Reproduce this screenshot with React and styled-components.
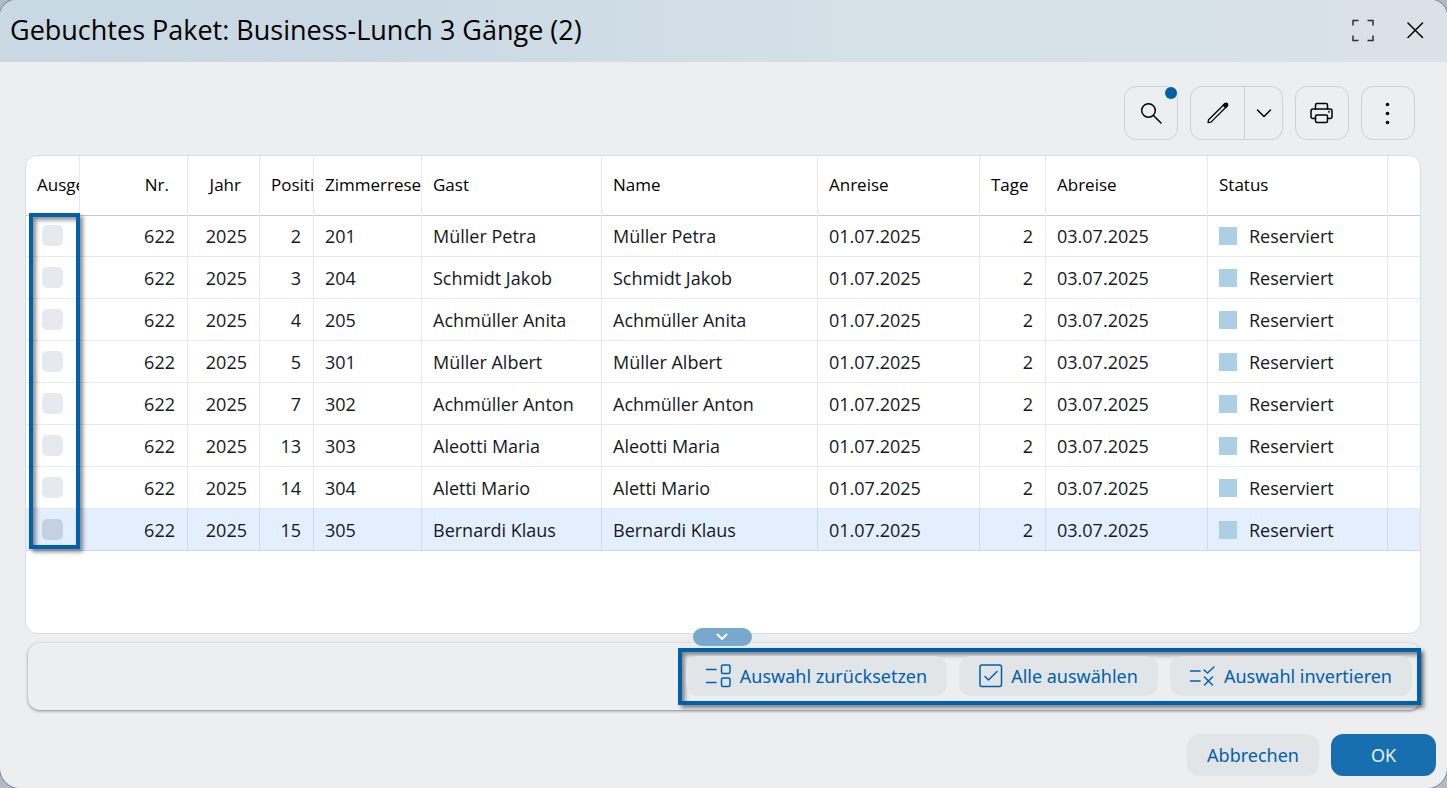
import { useState } from 'react'
import styled, { createGlobalStyle } from 'styled-components'

const GlobalStyle = createGlobalStyle`
  * {
    box-sizing: border-box;
  }

  body {
    margin: 0;
    background: #b3bac6;
    font-family: "Open Sans", "Noto Sans", sans-serif;
    font-size: 18px;
    color: #15181c;
  }

  button {
    font: inherit;
    cursor: pointer;
  }
`

const Dialog = styled.div`
  display: flex;
  flex-direction: column;
  min-height: 100vh;
  background: #edeef0;
  border-radius: 16px 16px 20px 20px;
  box-shadow: 0 0 0 1px #7c8799;
  overflow: hidden;
`

const Header = styled.header`
  display: flex;
  align-items: center;
  justify-content: space-between;
  height: 62px;
  padding: 0 16px 2px 10px;
  background: linear-gradient(90deg, #c8d9e3 0%, #cad8e4 25%, #d4e1e7 60%, #d6e2e7 80%, #dae1e9 95%);
`

const Title = styled.h1`
  margin: 0;
  color: #000;
  font-size: 27px;
  font-weight: 400;
  line-height: 36px;
`

const HeaderActions = styled.div`
  display: flex;
  gap: 20px;
`

const IconButton = styled.button`
  display: flex;
  align-items: center;
  justify-content: center;
  width: 32px;
  height: 32px;
  padding: 0;
  border: 0;
  background: none;
  color: #000;
`

const Body = styled.main`
  display: flex;
  flex: 1;
  flex-direction: column;
  padding: 24px 26px 0 25px;
`

const Toolbar = styled.div`
  display: flex;
  justify-content: flex-end;
  gap: 12px;
  padding-right: 6px;
`

const ToolButton = styled.button`
  position: relative;
  display: flex;
  align-items: center;
  justify-content: center;
  width: ${({ $narrow }) => ($narrow ? '38px' : '54px')};
  height: 54px;
  padding: 0;
  border: 1px solid #cdd1d9;
  border-radius: 12px;
  background: transparent;
  color: #000;
`

const SplitButton = styled.div`
  display: flex;

  ${ToolButton}:first-child {
    width: 55px;
    border-radius: 12px 0 0 12px;
  }

  ${ToolButton}:last-child {
    border-left: 0;
    border-radius: 0 12px 12px 0;
  }
`

const Dot = styled.span`
  position: absolute;
  top: 0;
  right: 0;
  width: 12px;
  height: 12px;
  border-radius: 50%;
  background: #0060a9;
`

const TableCard = styled.section`
  position: relative;
  flex: 1;
  margin-top: 15px;
  border: 1px solid #dadde3;
  border-radius: 12px;
  background: #fff;
`

const Table = styled.table`
  width: 100%;
  table-layout: fixed;
  border-spacing: 0;
`

const HeadCell = styled.th`
  height: 59px;
  padding: 0 0 2px 11px;
  padding-right: ${({ $right }) => ($right ? '18px' : '0')};
  border-right: 1px solid #e6e9ed;
  box-shadow: 0 1px #c5c8d0;
  overflow: hidden;
  color: #000;
  font-size: 17px;
  font-weight: 400;
  text-align: ${({ $right }) => ($right ? 'right' : 'left')};
  white-space: nowrap;

  &:first-child {
    border-top-left-radius: 12px;
  }

  &:last-child {
    border-right: 0;
  }
`

const Cell = styled.td`
  height: 42px;
  padding: 0 12px 0 11px;
  border-right: 1px solid #e6e9ed;
  border-bottom: 1px solid #e6e9ed;
  line-height: 24px;
  text-align: ${({ $right }) => ($right ? 'right' : 'left')};
  white-space: nowrap;

  &:last-child {
    border-right: 0;
  }
`

const Row = styled.tr`
  ${Cell} {
    background: ${({ $active }) => ($active ? '#e3effe' : 'transparent')};
    border-color: ${({ $active }) => ($active ? '#cddaeb' : '#e6e9ed')};
  }
`

const Checkbox = styled.input`
  display: block;
  appearance: none;
  width: 21px;
  height: 21px;
  margin: 0 0 0 5px;
  border-radius: 5px;
  background: ${({ $active }) => ($active ? '#c4d1e2' : '#e6eaef')};

  &:checked {
    background: #0060a9;
  }
`

const Status = styled.span`
  display: flex;
  align-items: center;
  gap: 12px;

  &::before {
    content: "";
    width: 18px;
    height: 18px;
    background: #abd0e6;
  }
`

const ColumnFrame = styled.div`
  position: absolute;
  top: 57px;
  left: 3px;
  width: 51px;
  height: 336px;
  border: 4px solid #0060a9;
  box-shadow: 3px 3px 4px rgba(0, 0, 0, 0.45), inset 3px 3px 4px rgba(0, 0, 0, 0.45);
  pointer-events: none;
`

const ActionPanel = styled.footer`
  position: relative;
  display: flex;
  justify-content: flex-end;
  margin: 9px 0 0 3px;
  padding: 5px 0;
  border-radius: 12px;
  box-shadow: 0 1px 3px rgba(60, 70, 90, 0.6);
`

const ActionFrame = styled.div`
  display: flex;
  gap: 12px;
  padding: 4px 5px 5px 4px;
  border: 4px solid #0060a9;
  box-shadow: 3px 3px 4px rgba(0, 0, 0, 0.45), inset 3px 3px 4px rgba(0, 0, 0, 0.45);
`

const CollapseButton = styled.button`
  position: absolute;
  top: -15px;
  left: 50%;
  display: flex;
  align-items: center;
  justify-content: center;
  width: 59px;
  height: 18px;
  margin-left: -32px;
  padding: 0;
  border: 0;
  border-radius: 9px;
  background: #79a8cd;
  color: #fff;
`

const Button = styled.button`
  display: flex;
  align-items: center;
  justify-content: center;
  gap: 8px;
  height: ${({ $large }) => ($large ? '42px' : '40px')};
  padding: 0 20px;
  border: 0;
  border-radius: 12px;
  background: ${({ $primary }) => ($primary ? '#176fb0' : '#e1e5e8')};
  color: ${({ $primary }) => ($primary ? '#e8f2fb' : '#0060a9')};
  font-family: "Noto Sans", "Open Sans", sans-serif;
  white-space: nowrap;
`

const DialogButtons = styled.div`
  display: flex;
  justify-content: flex-end;
  gap: 12px;
  padding: 24px 11px 12px;

  ${Button}:last-child {
    width: 105px;
  }
`

const columns = [
  { title: 'Ausgewählt', width: 54 },
  { title: 'Nr.', width: 108, right: true },
  { title: 'Jahr', width: 72, right: true },
  { title: 'Position', width: 54 },
  { title: 'Zimmerreservierung', width: 108 },
  { title: 'Gast', width: 180 },
  { title: 'Name', width: 216 },
  { title: 'Anreise', width: 162 },
  { title: 'Tage', width: 66, right: true },
  { title: 'Abreise', width: 162 },
  { title: 'Status', width: 180 },
  { title: '' },
]

const guests = [
  { position: 2, room: '201', name: 'Müller Petra' },
  { position: 3, room: '204', name: 'Schmidt Jakob' },
  { position: 4, room: '205', name: 'Achmüller Anita' },
  { position: 5, room: '301', name: 'Müller Albert' },
  { position: 7, room: '302', name: 'Achmüller Anton' },
  { position: 13, room: '303', name: 'Aleotti Maria' },
  { position: 14, room: '304', name: 'Aletti Mario' },
  { position: 15, room: '305', name: 'Bernardi Klaus' },
]

function Icon({ width = 24, height = 24, stroke = 1.5, children }) {
  return (
    <svg
      width={width}
      height={height}
      viewBox={`0 0 ${width} ${height}`}
      fill="none"
      stroke="currentColor"
      strokeWidth={stroke}
      strokeLinecap="round"
      strokeLinejoin="round"
      aria-hidden="true"
    >
      {children}
    </svg>
  )
}

export default function App() {
  const [selected, setSelected] = useState([])

  const toggle = (position) =>
    setSelected((old) => (old.includes(position) ? old.filter((p) => p !== position) : [...old, position]))

  return (
    <>
      <GlobalStyle />
      <Dialog role="dialog" aria-labelledby="dialog-title">
        <Header>
          <Title id="dialog-title">Gebuchtes Paket: Business-Lunch 3 Gänge (2)</Title>
          <HeaderActions>
            <IconButton aria-label="Vollbild">
              <Icon>
                <path strokeLinecap="butt" strokeLinejoin="miter" stroke="#27313a" d="M2 7.500V2.500H7.500M16.500 2.500h5.500v5M22 17.500v5H16.500M7.500 22.500H2v-5" />
              </Icon>
            </IconButton>
            <IconButton aria-label="Schließen">
              <Icon>
                <path d="M5 5l14.500 14.500M19.500 5L5 19.500" />
              </Icon>
            </IconButton>
          </HeaderActions>
        </Header>

        <Body>
          <Toolbar>
            <ToolButton aria-label="Suchen">
              <Icon>
                <circle cx="9.500" cy="9.500" r="6.800" />
                <path d="M14.500 14.500l7.500 7.500" />
              </Icon>
              <Dot />
            </ToolButton>
            <SplitButton>
              <ToolButton aria-label="Bearbeiten">
                <Icon stroke={1.3}>
                  <path d="M2 21.500l.6-2.800L18.800 2.700l2.300 2.300L5 21.100l-2.800.5z" />
                  <path fill="currentColor" d="M17.300 4.200l1.700-1.700q1.200-.8 2.200.1t.2 2.300l-1.800 1.700z" />
                </Icon>
              </ToolButton>
              <ToolButton $narrow aria-label="Weitere Bearbeitungen">
                <Icon>
                  <path d="M5.500 9l6.500 6.500L18.500 9" />
                </Icon>
              </ToolButton>
            </SplitButton>
            <ToolButton aria-label="Drucken">
              <Icon>
                <path d="M5.500 8V4q0-1.500 1.500-1.500h9q1.500 0 1.500 1.500v4" />
                <path d="M5.500 17.500H3q-2 0-2-2V10q0-2 2-2h17q2 0 2 2v5.500q0 2-2 2h-2.500" />
                <rect x="5.500" y="14" width="12" height="7.500" rx="1.500" />
                <circle cx="19" cy="10.800" r=".3" />
              </Icon>
            </ToolButton>
            <ToolButton aria-label="Mehr">
              <Icon>
                <g fill="currentColor" stroke="none">
                  <circle cx="11.500" cy="3.500" r="1.800" />
                  <circle cx="11.500" cy="12.500" r="1.800" />
                  <circle cx="11.500" cy="21.500" r="1.800" />
                </g>
              </Icon>
            </ToolButton>
          </Toolbar>

          <TableCard>
            <Table>
              <colgroup>
                {columns.map((column) => (
                  <col key={column.title} width={column.width} />
                ))}
              </colgroup>
              <thead>
                <tr>
                  {columns.map((column) => (
                    <HeadCell key={column.title} $right={column.right}>
                      {column.title}
                    </HeadCell>
                  ))}
                </tr>
              </thead>
              <tbody>
                {guests.map((guest) => (
                  <Row key={guest.position} $active={guest.position === 15}>
                    <Cell>
                      <Checkbox
                        type="checkbox"
                        aria-label={`${guest.name} auswählen`}
                        $active={guest.position === 15}
                        checked={selected.includes(guest.position)}
                        onChange={() => toggle(guest.position)}
                      />
                    </Cell>
                    <Cell $right>622</Cell>
                    <Cell $right>2025</Cell>
                    <Cell $right>{guest.position}</Cell>
                    <Cell>{guest.room}</Cell>
                    <Cell>{guest.name}</Cell>
                    <Cell>{guest.name}</Cell>
                    <Cell>01.07.2025</Cell>
                    <Cell $right>2</Cell>
                    <Cell>03.07.2025</Cell>
                    <Cell>
                      <Status>Reserviert</Status>
                    </Cell>
                    <Cell />
                  </Row>
                ))}
              </tbody>
            </Table>
            <ColumnFrame />
          </TableCard>

          <ActionPanel>
            <CollapseButton aria-label="Leiste einklappen">
              <Icon width={12} height={8} stroke={2}>
                <path d="M1.500 1.500L6 6l4.500-4.500" />
              </Icon>
            </CollapseButton>
            <ActionFrame>
              <Button onClick={() => setSelected([])}>
                <Icon width={26}>
                  <path d="M0 5.500h10M0 18.500h10" />
                  <rect x="15.500" y="1" width="8.500" height="8.500" rx="1.500" />
                  <rect x="15.500" y="14" width="8.500" height="8.500" rx="1.500" />
                </Icon>
                Auswahl zurücksetzen
              </Button>
              <Button onClick={() => setSelected(guests.map((g) => g.position))}>
                <Icon>
                  <rect x="1" y="1" width="21.500" height="21.500" rx="2" />
                  <path d="M6 12.500l3.500 3.500 8.500-8.500" />
                </Icon>
                Alle auswählen
              </Button>
              <Button
                onClick={() => setSelected(guests.map((g) => g.position).filter((p) => !selected.includes(p)))}
              >
                <Icon width={26}>
                  <path d="M0 7h10M0 17h10" />
                  <path d="M14 6l3.500 3 6.500-6M14.500 13l8 8M22.500 13l-8 8" />
                </Icon>
                Auswahl invertieren
              </Button>
            </ActionFrame>
          </ActionPanel>
        </Body>

        <DialogButtons>
          <Button $large>Abbrechen</Button>
          <Button $large $primary>OK</Button>
        </DialogButtons>
      </Dialog>
    </>
  )
}
